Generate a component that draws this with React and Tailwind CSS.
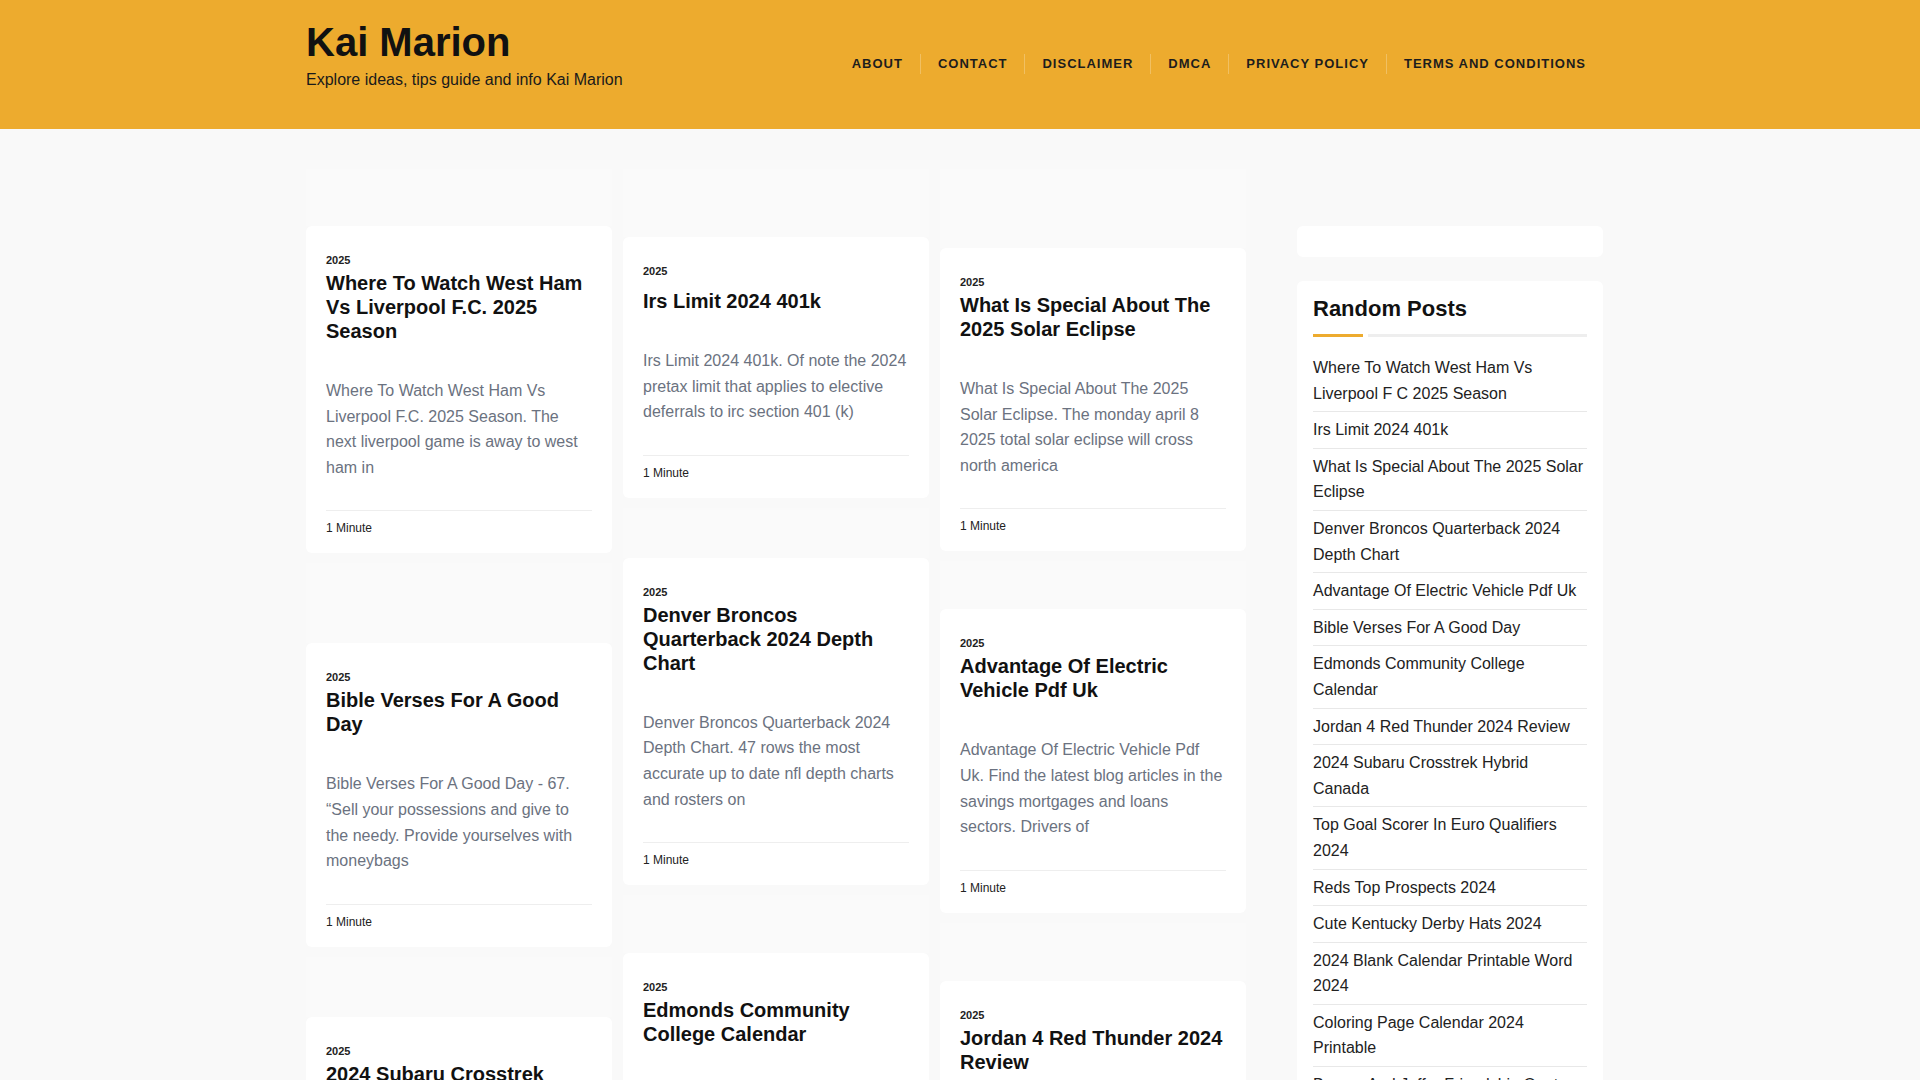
import React from 'react';

// Kai Marion - blog home, masonry of posts + random posts sidebar

const navLinks = ['About', 'Contact', 'Disclaimer', 'DMCA', 'Privacy Policy', 'Terms and Conditions'];

const columns = [
  [
    {
      ph: 'h-[57px]',
      title: 'Where To Watch West Ham Vs Liverpool F.C. 2025 Season',
      excerpt: 'Where To Watch West Ham Vs Liverpool F.C. 2025 Season. The next liverpool game is away to west ham in',
    },
    {
      ph: 'h-[80px]',
      title: 'Bible Verses For A Good Day',
      excerpt: 'Bible Verses For A Good Day - 67. \u201cSell your possessions and give to the needy. Provide yourselves with moneybags',
    },
    {
      ph: 'h-[60px]',
      title: '2024 Subaru Crosstrek Hybrid Canada',
      excerpt: '2024 Subaru Crosstrek Hybrid Canada. The new crosstrek hybrid brings more power and better fuel economy to',
    },
  ],
  [
    {
      ph: 'h-[68px]',
      single: true,
      title: 'Irs Limit 2024 401k',
      excerpt: 'Irs Limit 2024 401k. Of note the 2024 pretax limit that applies to elective deferrals to irc section 401 (k)',
    },
    {
      ph: 'h-[50px]',
      title: 'Denver Broncos Quarterback 2024 Depth Chart',
      excerpt: 'Denver Broncos Quarterback 2024 Depth Chart. 47 rows the most accurate up to date nfl depth charts and rosters on',
    },
    {
      ph: 'h-[58px]',
      title: 'Edmonds Community College Calendar',
      excerpt: 'Edmonds Community College Calendar. Find the academic calendar, important dates and deadlines for the',
    },
  ],
  [
    {
      ph: 'h-[79px]',
      title: 'What Is Special About The 2025 Solar Eclipse',
      excerpt: 'What Is Special About The 2025 Solar Eclipse. The monday april 8 2025 total solar eclipse will cross north america',
    },
    {
      ph: 'h-[48px]',
      title: 'Advantage Of Electric Vehicle Pdf Uk',
      excerpt: 'Advantage Of Electric Vehicle Pdf Uk. Find the latest blog articles in the savings mortgages and loans sectors. Drivers of',
    },
    {
      ph: 'h-[58px]',
      title: 'Jordan 4 Red Thunder 2024 Review',
      excerpt: 'Jordan 4 Red Thunder 2024 Review. The air jordan 4 red thunder returns with a bold look that',
    },
  ],
];

const randomPosts = [
  'Where To Watch West Ham Vs Liverpool F C 2025 Season',
  'Irs Limit 2024 401k',
  'What Is Special About The 2025 Solar Eclipse',
  'Denver Broncos Quarterback 2024 Depth Chart',
  'Advantage Of Electric Vehicle Pdf Uk',
  'Bible Verses For A Good Day',
  'Edmonds Community College Calendar',
  'Jordan 4 Red Thunder 2024 Review',
  '2024 Subaru Crosstrek Hybrid Canada',
  'Top Goal Scorer In Euro Qualifiers 2024',
  'Reds Top Prospects 2024',
  'Cute Kentucky Derby Hats 2024',
  '2024 Blank Calendar Printable Word 2024',
  'Coloring Page Calendar 2024 Printable',
  'Barney And Jaffer Friendship Quotes',
  'Printable 2024 Monthly Calendar',
];

const PostCard = ({ post }) => (
  <div className="flex flex-col">
    <div className={`${post.ph} bg-[#fafafa]`} />
    <article className="bg-white rounded-md pt-[26px] px-5 pb-[17px]">
      <div className="text-[11px] leading-4 font-bold text-[#222]">2025</div>
      <h2 className={`${post.single ? 'mt-[10px]' : 'mt-[3px]'} text-[20px] leading-6 font-bold text-[#111]`}>
        {post.title}
      </h2>
      <p className="mt-[35px] text-base leading-[1.6] text-[#6b7280]">{post.excerpt}</p>
      <div className="mt-[30px] border-t border-[#eeeeee] pt-[9px] text-xs leading-4 text-[#222]">1 Minute</div>
    </article>
  </div>
);

export default function App() {
  return (
    <div className="min-h-screen bg-[#f9f9f9] font-['Liberation_Sans',Arial,sans-serif]">
      {/* Cabecera */}
      <header className="bg-[#edab2e] h-[129px]">
        <div className="w-[1308px] pr-[11px] mx-auto flex justify-between items-start">
          <div className="pt-[18px]">
            <h1 className="text-[40px] leading-[48px] font-bold text-[#111]">Kai Marion</h1>
            <p className="mt-[2px] text-base leading-6 text-[#1a1a1a]">Explore ideas, tips guide and info Kai Marion</p>
          </div>
          <nav className="mt-[54px] flex">
            {navLinks.map((l, i) => (
              <a
                key={l}
                href="#"
                className={`px-[17px] leading-5 text-[13px] font-bold uppercase tracking-[1px] text-[#1d1d1d] ${i ? 'border-l border-white/25' : ''}`}
              >
                {l}
              </a>
            ))}
          </nav>
        </div>
      </header>

      {/* Contenido */}
      <main className="w-[1308px] pr-[11px] mx-auto pt-10 flex items-start">
        <div className="flex gap-[11px]">
          {columns.map((col, ci) => (
            <div key={ci} className="w-[306px] flex flex-col gap-[10px]">
              {col.map((p) => (
                <PostCard key={p.title} post={p} />
              ))}
            </div>
          ))}
        </div>

        <aside className="ml-[51px] w-[306px] pt-[57px]">
          <div className="h-[31px] bg-white rounded-md" />
          <div className="mt-[24px] bg-white rounded-md px-4 pt-[15px] pb-4">
            <h3 className="text-[22px] leading-[26px] font-bold text-[#111]">Random Posts</h3>
            <div className="mt-3 flex items-center gap-[5px]">
              <div className="w-[50px] h-[3px] bg-[#edab2e]" />
              <div className="flex-1 h-[3px] bg-[#eeeeee]" />
            </div>
            <ul className="mt-[13px]">
              {randomPosts.map((t) => (
                <li key={t} className="pt-[5px] pb-[5px] border-b border-[#e8e8e8] text-base leading-[1.6] text-[#222]">
                  <a href="#">{t}</a>
                </li>
              ))}
            </ul>
          </div>
        </aside>
      </main>
    </div>
  );
}
